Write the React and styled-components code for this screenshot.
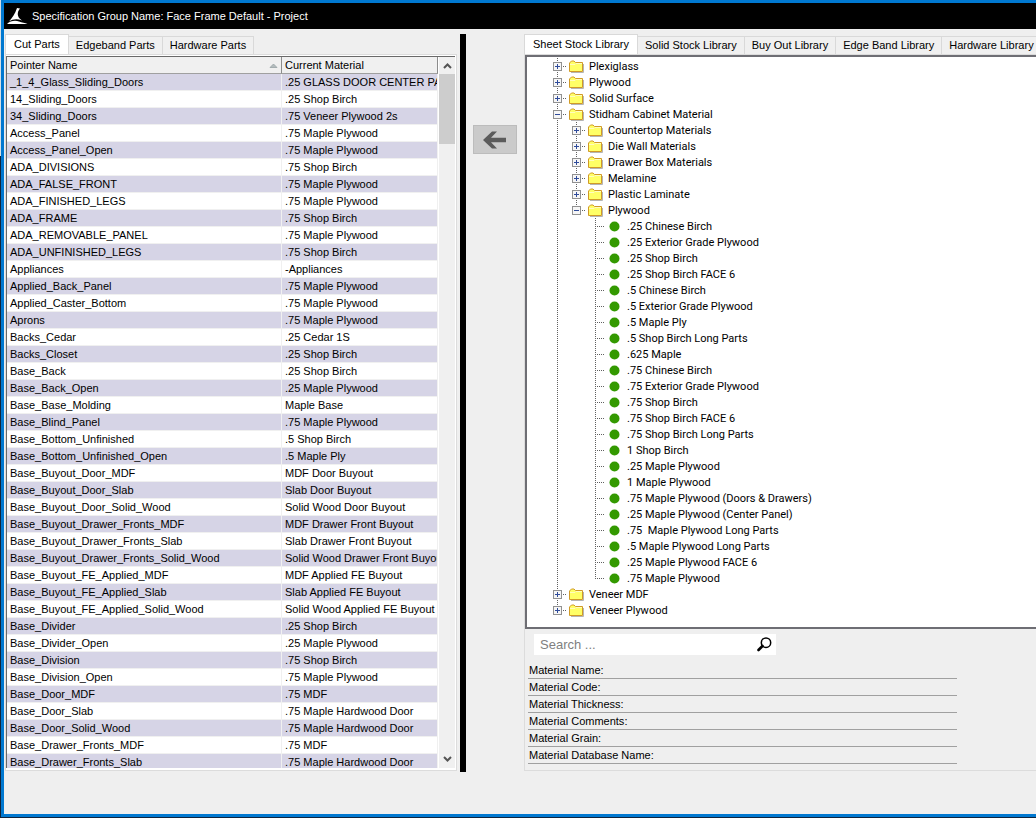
import React from 'react';
import styled, { createGlobalStyle, css } from 'styled-components';

const GlobalStyle = createGlobalStyle`
  * { box-sizing: border-box; }
  body { margin: 0; background: linear-gradient(#d5dfe6 0 156px, #10243c 156px) no-repeat #10243c; }
  body, button, input, table {
    font-family: "Liberation Sans", Arial, sans-serif;
    font-size: 11px;
    color: #000;
  }
`;

const dotsDown = 'repeating-linear-gradient(to bottom, #606060 0 1px, transparent 1px 2px)';
const dotsAcross = 'repeating-linear-gradient(to right, #606060 0 1px, transparent 1px 2px)';

const Window = styled.div`
  display: flex;
  flex-direction: column;
  height: calc(100vh - 1px);
  min-height: 480px;
  margin-left: 1px;
  border: solid #0078d0;
  border-width: 3px 0 3px 3px;
  background: #efefef;
  overflow: hidden;
`;

const TitleBar = styled.header`
  display: flex;
  align-items: center;
  flex: none;
  gap: 4px;
  height: 26px;
  padding-left: 3px;
  background: #000;
`;

const Title = styled.h1`
  margin: 0;
  font-size: 11px;
  font-weight: 400;
  color: #fff;
`;

const Body = styled.main`
  display: flex;
  flex: 1;
  min-height: 0;
  padding: 5px 0 42px 1px;
`;

const Pane = styled.section`
  display: flex;
  flex-direction: column;
  min-width: 0;
  flex: ${(p) => (p.$width ? `0 0 ${p.$width}` : '1')};
  margin-bottom: 1px;
`;

const TabList = styled.div`
  display: flex;
  flex: none;
  align-items: flex-end;
  height: 20px;
  overflow: hidden;
`;

const Tab = styled.button`
  flex: none;
  height: ${(p) => (p.$active ? 20 : 18)}px;
  padding: 0 ${(p) => (p.$active ? 8 : 7)}px 1px;
  border: 1px solid #d9d9d9;
  border-left-width: ${(p) => (p.$active ? 1 : 0)}px;
  border-bottom: 0;
  background: ${(p) => (p.$active ? '#fff' : '#f0f0f0')};
  white-space: nowrap;
`;

const Page = styled.div`
  display: flex;
  flex-direction: column;
  flex: 1;
  min-height: 0;
  border: 1px solid #dcdcdc;
  border-right-width: ${(p) => (p.$open ? 0 : 1)}px;
  padding: ${(p) => (p.$open ? '0' : '1px 1px 2px 0')};
  background: ${(p) => (p.$open ? '#efefef' : '#fff')};
`;

const GridFrame = styled.div`
  display: flex;
  flex: 1;
  min-height: 0;
  border-top: 1px solid #696969;
  border-left: 1px solid #696969;
  background: #fff;
`;

const GridView = styled.div`
  flex: 1;
  min-width: 0;
  overflow: hidden;
`;

const Grid = styled.table`
  width: 100%;
  table-layout: fixed;
  border-collapse: separate;
  border-spacing: 0;
`;

const cell = css`
  height: 17px;
  padding: 0 0 0 3px;
  text-align: left;
  font-weight: 400;
  line-height: 16px;
  white-space: nowrap;
  overflow: hidden;
`;

const HeadCell = styled.th`
  ${cell}
  width: ${(p) => p.$width || 'auto'};
  background: #f0f0f0;
  border-right: 1px solid #8c8c8c;
  border-bottom: 1px solid #a0a0a0;
`;

const HeadLabel = styled.span`
  display: flex;
  justify-content: space-between;
  align-items: center;
  padding-right: 3px;
`;

const Row = styled.tr`
  background: #fff;
  &:nth-child(odd) { background: #d6d4e6; }
`;

const Cell = styled.td`
  ${cell}
  border-right: 1px solid #f0f0f0;
  border-bottom: 1px solid #f0f0f0;
`;

const ScrollBar = styled.div`
  display: flex;
  flex-direction: column;
  flex: none;
  width: 17px;
  background: #f0f0f0;
  border-left: 1px solid #fff;
`;

const ScrollButton = styled.button`
  display: flex;
  align-items: center;
  justify-content: center;
  flex: none;
  height: 17px;
  padding: 0;
  border: 0;
  background: transparent;
`;

const ScrollThumb = styled.div`
  height: 70px;
  margin-bottom: auto;
  background: #cdcdcd;
`;

const Splitter = styled.div`
  flex: none;
  width: 6px;
  margin: 0 7px 0 3px;
  background: #000;
`;

const MoveButton = styled.button`
  display: flex;
  align-items: center;
  justify-content: center;
  flex: none;
  width: 44px;
  height: 29px;
  margin: 91px 7px 0 0;
  padding: 0;
  border: 1px solid #bcbcbc;
  background: #cacaca;
`;

const Tree = styled.ul`
  flex: 1;
  min-height: 0;
  margin: 0;
  padding: 1px 0 0 21px;
  list-style: none;
  overflow: hidden;
  background: #fff;
  border: solid #6e6e74;
  border-width: 2px 0 2px 2px;
  font-family: Roboto, "Liberation Sans", sans-serif;
`;

const TreeRow = styled.li`
  display: flex;
  height: 16px;
  line-height: 18px;
  white-space: pre;
`;

const Guide = styled.span`
  flex: none;
  display: flex;
  align-items: center;
  width: 19px;
  padding-left: 5px;
  background-repeat: no-repeat;
  background-image: ${(p) => (p.$down ? dotsDown : 'none')}, ${(p) => (p.$across ? dotsAcross : 'none')};
  background-position: 9px 0, 9px 8px;
  background-size: 1px ${(p) => (p.$down === 'half' ? '8px' : '16px')}, 10px 1px;
`;

const Expander = styled.button`
  display: flex;
  padding: 0;
  border: 0;
  background: none;
`;

const IconSlot = styled.span`
  flex: none;
  display: flex;
  align-items: center;
  justify-content: center;
  width: 19px;
  margin-right: 3px;
`;

const SearchBox = styled.label`
  display: flex;
  align-items: center;
  flex: none;
  width: 242px;
  height: 21px;
  margin: 5px 0 7px 9px;
  padding: 0 4px 0 6px;
  background: #fff;
`;

const SearchInput = styled.input`
  flex: 1;
  min-width: 0;
  padding: 0;
  border: 0;
  outline: 0;
  background: transparent;
  font-size: 13px;
  &::placeholder { color: #808080; opacity: 1; }
`;

const Details = styled.dl`
  flex: none;
  width: 429px;
  margin: 0 0 6px 3px;
`;

const Detail = styled.div`
  display: flex;
  height: 17px;
  padding-left: 1px;
  line-height: 17px;
  border-bottom: 1px solid #a0a0a0;
`;

const parts = `_1_4_Glass_Sliding_Doors|.25 GLASS DOOR CENTER PANEL
14_Sliding_Doors|.25 Shop Birch
34_Sliding_Doors|.75 Veneer Plywood 2s
Access_Panel|.75 Maple Plywood
Access_Panel_Open|.75 Maple Plywood
ADA_DIVISIONS|.75 Shop Birch
ADA_FALSE_FRONT|.75 Maple Plywood
ADA_FINISHED_LEGS|.75 Maple Plywood
ADA_FRAME|.75 Shop Birch
ADA_REMOVABLE_PANEL|.75 Maple Plywood
ADA_UNFINISHED_LEGS|.75 Shop Birch
Appliances|-Appliances
Applied_Back_Panel|.75 Maple Plywood
Applied_Caster_Bottom|.75 Maple Plywood
Aprons|.75 Maple Plywood
Backs_Cedar|.25 Cedar 1S
Backs_Closet|.25 Shop Birch
Base_Back|.25 Shop Birch
Base_Back_Open|.25 Maple Plywood
Base_Base_Molding|Maple Base
Base_Blind_Panel|.75 Maple Plywood
Base_Bottom_Unfinished|.5 Shop Birch
Base_Bottom_Unfinished_Open|.5 Maple Ply
Base_Buyout_Door_MDF|MDF Door Buyout
Base_Buyout_Door_Slab|Slab Door Buyout
Base_Buyout_Door_Solid_Wood|Solid Wood Door Buyout
Base_Buyout_Drawer_Fronts_MDF|MDF Drawer Front Buyout
Base_Buyout_Drawer_Fronts_Slab|Slab Drawer Front Buyout
Base_Buyout_Drawer_Fronts_Solid_Wood|Solid Wood Drawer Front Buyout
Base_Buyout_FE_Applied_MDF|MDF Applied FE Buyout
Base_Buyout_FE_Applied_Slab|Slab Applied FE Buyout
Base_Buyout_FE_Applied_Solid_Wood|Solid Wood Applied FE Buyout
Base_Divider|.25 Shop Birch
Base_Divider_Open|.25 Maple Plywood
Base_Division|.75 Shop Birch
Base_Division_Open|.75 Maple Plywood
Base_Door_MDF|.75 MDF
Base_Door_Slab|.75 Maple Hardwood Door
Base_Door_Solid_Wood|.75 Maple Hardwood Door
Base_Drawer_Fronts_MDF|.75 MDF
Base_Drawer_Fronts_Slab|.75 Maple Hardwood Door`.split('\n').map((l) => l.split('|'));

const leaf = (label) => ({ label, leaf: true });
const folder = (label, children) => ({ label, children });

const library = [
  folder('Plexiglass'),
  folder('Plywood'),
  folder('Solid Surface'),
  folder('Stidham Cabinet Material', [
    folder('Countertop Materials'),
    folder('Die Wall Materials'),
    folder('Drawer Box Materials'),
    folder('Melamine'),
    folder('Plastic Laminate'),
    folder('Plywood', [
      '.25 Chinese Birch', '.25 Exterior Grade Plywood', '.25 Shop Birch', '.25 Shop Birch FACE 6',
      '.5 Chinese Birch', '.5 Exterior Grade Plywood', '.5 Maple Ply', '.5 Shop Birch Long Parts',
      '.625 Maple', '.75 Chinese Birch', '.75 Exterior Grade Plywood', '.75 Shop Birch',
      '.75 Shop Birch FACE 6', '.75 Shop Birch Long Parts', '1 Shop Birch', '.25 Maple Plywood',
      '1 Maple Plywood', '.75 Maple Plywood (Doors & Drawers)', '.25 Maple Plywood (Center Panel)',
      '.75  Maple Plywood Long Parts', '.5 Maple Plywood Long Parts', '.25 Maple Plywood FACE 6',
      '.75 Maple Plywood',
    ].map(leaf)),
  ]),
  folder('Veneer MDF'),
  folder('Veneer Plywood'),
];

const flatten = (nodes, trail = []) =>
  nodes.flatMap((node, i) => {
    const last = i === nodes.length - 1;
    return [{ ...node, trail, last }, ...flatten(node.children || [], [...trail, !last])];
  });

const fields = ['Name', 'Code', 'Thickness', 'Comments', 'Grain', 'Database Name'];

const Logo = () => (
  <svg width="21" height="18" viewBox="0 0 21 18" aria-hidden="true">
    <path d="M10 1 L13 1.500 C10 5 9.500 10 15 13.500 C10 11.500 6 12 2 14.500 C5 11 8 7 10 1 Z" fill="#fff" />
    <path d="M0 17 C3 14 8 13 12 14.500 C15 15.500 18 16 20.500 17 Z" fill="#fff" />
  </svg>
);

const SortArrow = () => (
  <svg width="9" height="5" viewBox="0 0 9 5" aria-hidden="true">
    <path d="M1 4.500 L4.500 1 L8 4.500 Z" fill="#b4bcbe" stroke="#97a2a4" strokeWidth=".8" />
  </svg>
);

const Chevron = ({ down }) => (
  <svg width="9" height="7" viewBox="0 0 9 7" aria-hidden="true">
    <path d={down ? 'M1 1 L4.500 4.500 L8 1' : 'M1 6 L4.500 2.500 L8 6'} fill="none" stroke="#555" strokeWidth="2" />
  </svg>
);

const LeftArrow = () => (
  <svg width="24" height="18" viewBox="0 0 24 18" aria-hidden="true">
    <path d="M0 9 L9 .5 H14 L8 6.800 H23 V11.200 H8 L14 17.500 H9 Z" fill="#5b5b5b" />
  </svg>
);

const ExpandMark = ({ open }) => (
  <svg width="9" height="9" viewBox="0 0 9 9" shapeRendering="crispEdges" aria-hidden="true">
    <rect x=".5" y=".5" width="8" height="8" fill="#f6f6f6" stroke="#919191" />
    <path d={open ? 'M2 4.500H7' : 'M2 4.500H7M4.500 2V7'} stroke="#2f4b9a" />
  </svg>
);

const FolderIcon = () => (
  <svg width="15" height="13" viewBox="0 0 15 13" aria-hidden="true">
    <path d="M2 12.500 H14.500 V4" fill="none" stroke="#b5b5b5" />
    <path d="M.5 11.500 V3 L2.500 1 H5 L6.500 2.500 H13.500 V11.500 Z" fill="#ffff66" stroke="#d09a28" />
    <path d="M1 4.500 H6 L7 3.500 H13" fill="none" stroke="#fffcc0" />
  </svg>
);

const Dot = () => (
  <svg width="11" height="11" viewBox="0 0 11 11" aria-hidden="true">
    <circle cx="5.500" cy="5.500" r="5" fill="#339900" />
  </svg>
);

const Magnifier = () => (
  <svg width="16" height="16" viewBox="0 0 16 16" aria-hidden="true">
    <circle cx="10" cy="5.700" r="4.700" fill="none" stroke="#000" strokeWidth="1.500" />
    <path d="M6.500 9 L2.500 13" stroke="#000" strokeWidth="2.600" strokeLinecap="round" />
  </svg>
);

const Tabs = ({ names, label }) => (
  <TabList role="tablist" aria-label={label}>
    {names.map((name, i) => (
      <Tab key={name} role="tab" aria-selected={i === 0} $active={i === 0}>{name}</Tab>
    ))}
  </TabList>
);

export default function App() {
  return (
    <>
      <GlobalStyle />
      <Window>
        <TitleBar>
          <Logo />
          <Title>Specification Group Name: Face Frame Default - Project</Title>
        </TitleBar>
        <Body>
          <Pane $width="452px">
            <Tabs label="Parts" names={['Cut Parts', 'Edgeband Parts', 'Hardware Parts']} />
            <Page>
              <GridFrame>
                <GridView>
                  <Grid>
                    <thead>
                      <tr>
                        <HeadCell $width="275px"><HeadLabel>Pointer Name<SortArrow /></HeadLabel></HeadCell>
                        <HeadCell>Current Material</HeadCell>
                      </tr>
                    </thead>
                    <tbody>
                      {parts.map(([name, material]) => (
                        <Row key={name}><Cell>{name}</Cell><Cell>{material}</Cell></Row>
                      ))}
                    </tbody>
                  </Grid>
                </GridView>
                <ScrollBar>
                  <ScrollButton aria-label="Scroll up"><Chevron /></ScrollButton>
                  <ScrollThumb />
                  <ScrollButton aria-label="Scroll down"><Chevron down /></ScrollButton>
                </ScrollBar>
              </GridFrame>
            </Page>
          </Pane>
          <Splitter />
          <MoveButton aria-label="Assign material"><LeftArrow /></MoveButton>
          <Pane>
            <Tabs
              label="Libraries"
              names={['Sheet Stock Library', 'Solid Stock Library', 'Buy Out Library', 'Edge Band Library', 'Hardware Library']}
            />
            <Page $open>
              <Tree>
                {flatten(library).map((node, i) => (
                  <TreeRow key={i}>
                    {node.trail.map((more, d) => <Guide key={d} $down={more} />)}
                    <Guide $down={node.last ? 'half' : 'full'} $across>
                      {!node.leaf && (
                        <Expander aria-label={`Toggle ${node.label}`}><ExpandMark open={!!node.children} /></Expander>
                      )}
                    </Guide>
                    <IconSlot>{node.leaf ? <Dot /> : <FolderIcon />}</IconSlot>
                    {node.label}
                  </TreeRow>
                ))}
              </Tree>
              <SearchBox>
                <SearchInput type="text" placeholder="Search ..." aria-label="Search" />
                <Magnifier />
              </SearchBox>
              <Details>
                {fields.map((f) => <Detail key={f}><dt>Material {f}:</dt></Detail>)}
              </Details>
            </Page>
          </Pane>
        </Body>
      </Window>
    </>
  );
}
